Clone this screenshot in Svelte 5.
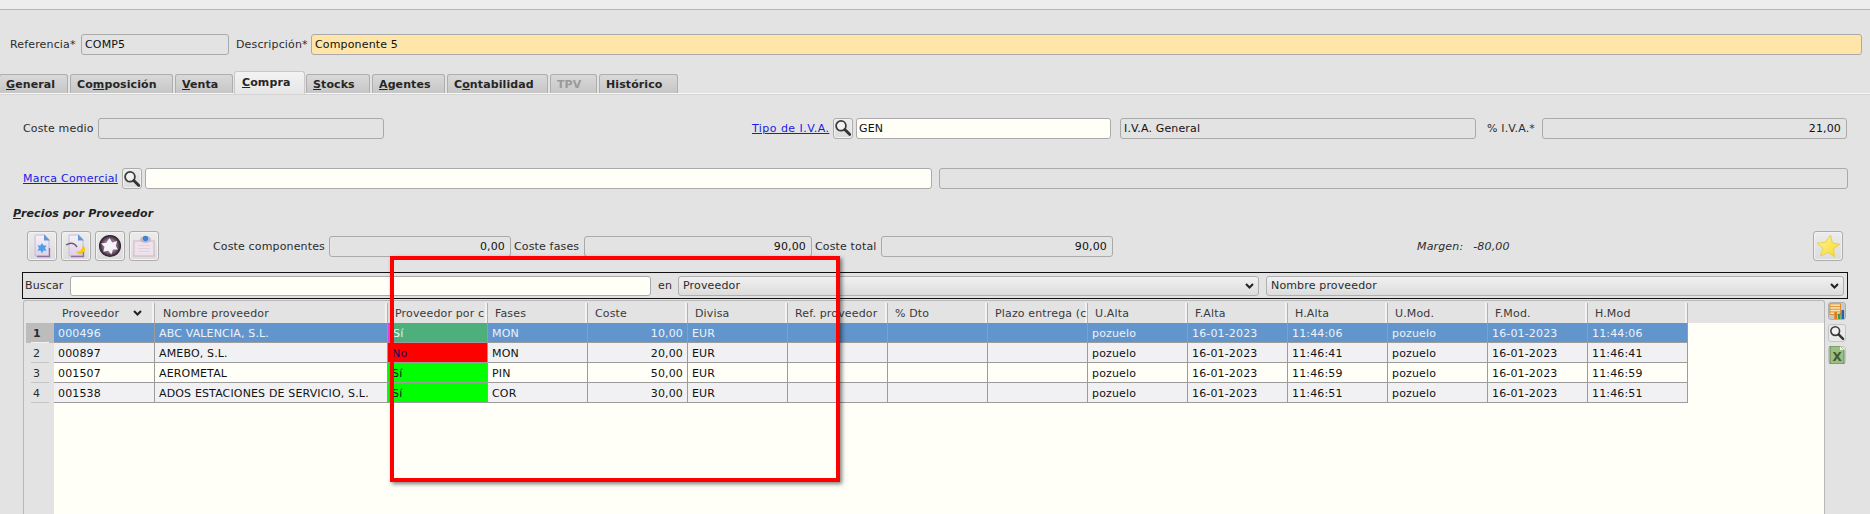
<script>
  const tabs = [
    { pre: '', u: 'G', post: 'eneral', w: 69 },
    { pre: 'Co', u: 'm', post: 'posición', w: 103 },
    { pre: '', u: 'V', post: 'enta', w: 58 },
    { pre: '', u: 'C', post: 'ompra', w: 71, active: true },
    { pre: '', u: 'S', post: 'tocks', w: 64 },
    { pre: '', u: 'A', post: 'gentes', w: 73 },
    { pre: 'C', u: 'o', post: 'ntabilidad', w: 101 },
    { pre: '', u: '', post: 'TPV', w: 47, disabled: true },
    { pre: '', u: '', post: 'Histórico', w: 79 }
  ];
  const cols = [
    { t: 'Proveedor', w: 101, sort: true },
    { t: 'Nombre proveedor', w: 233 },
    { t: 'Proveedor por c', w: 100 },
    { t: 'Fases', w: 100 },
    { t: 'Coste', w: 100, right: true },
    { t: 'Divisa', w: 100 },
    { t: 'Ref. proveedor', w: 100 },
    { t: '% Dto', w: 100 },
    { t: 'Plazo entrega (c', w: 100 },
    { t: 'U.Alta', w: 100 },
    { t: 'F.Alta', w: 100 },
    { t: 'H.Alta', w: 100 },
    { t: 'U.Mod.', w: 100 },
    { t: 'F.Mod.', w: 100 },
    { t: 'H.Mod', w: 100 }
  ];
  const rows = [
    ['000496', 'ABC VALENCIA, S.L.', 'Sí', 'MON', '10,00', 'EUR', '', '', '', 'pozuelo', '16-01-2023', '11:44:06', 'pozuelo', '16-01-2023', '11:44:06'],
    ['000897', 'AMEBO, S.L.', 'No', 'MON', '20,00', 'EUR', '', '', '', 'pozuelo', '16-01-2023', '11:46:41', 'pozuelo', '16-01-2023', '11:46:41'],
    ['001507', 'AEROMETAL', 'Sí', 'PIN', '50,00', 'EUR', '', '', '', 'pozuelo', '16-01-2023', '11:46:59', 'pozuelo', '16-01-2023', '11:46:59'],
    ['001538', 'ADOS ESTACIONES DE SERVICIO, S.L.', 'Sí', 'COR', '30,00', 'EUR', '', '', '', 'pozuelo', '16-01-2023', '11:46:51', 'pozuelo', '16-01-2023', '11:46:51']
  ];
</script>

{#snippet lens()}
  <svg width="18" height="18" viewBox="0 0 18 18">
    <circle cx="7" cy="6.800" r="4.900" fill="#f2f2f2" stroke="#3c3c3c" stroke-width="1.800" />
    <path d="M10.800 10.600 15.800 15.600" stroke="#333" stroke-width="2.800" stroke-linecap="round" />
  </svg>
{/snippet}

{#snippet chevron()}
  <svg class="chev" width="9" height="6" viewBox="0 0 9 6">
    <path d="M1 1 4.500 4.500 8 1" fill="none" stroke="#222" stroke-width="2" />
  </svg>
{/snippet}

<div class="page">
  <div class="topbar"></div>

  <div class="line head">
    <span class="lab ref-lab">Referencia*</span>
    <div class="box ref-box">COMP5</div>
    <span class="lab desc-lab">Descripción*</span>
    <div class="box desc-box">Componente 5</div>
  </div>

  <div class="tabs">
    {#each tabs as tab}
      <div class="tab" class:active={tab.active} class:disabled={tab.disabled} style="width:{tab.w}px">
        {tab.pre}<u>{tab.u}</u>{tab.post}
      </div>
    {/each}
  </div>

  <div class="line iva">
    <span class="lab medio-lab">Coste medio</span>
    <div class="box medio-box"></div>
    <a class="link iva-lab" href="#iva">Tipo de I.V.A.</a>
    <div class="btn small iva-btn">{@render lens()}</div>
    <div class="box white iva-box">GEN</div>
    <div class="box ivaname-box">I.V.A. General</div>
    <span class="lab pct-lab">% I.V.A.*</span>
    <div class="box right pct-box">21,00</div>
  </div>

  <div class="line marca">
    <a class="link marca-lab" href="#marca">Marca Comercial</a>
    <div class="btn small marca-btn">{@render lens()}</div>
    <div class="box white marca-box"></div>
    <div class="box marcaname-box"></div>
  </div>

  <div class="section"><u>P</u>recios por Proveedor</div>

  <div class="line tools">
    <div class="btn big">
      <svg width="24" height="26" viewBox="0 0 24 26">
        <defs>
          <linearGradient id="pg" x1="0" y1="0" x2="0" y2="1">
            <stop offset="0" stop-color="#f6f2f8" />
            <stop offset="1" stop-color="#dfcfe6" />
          </linearGradient>
        </defs>
        <path d="M5 2h10l4 5v16H5z" fill="url(#pg)" stroke="#c9b8d4" />
        <path d="M14 1.500l6 6h-6z" fill="#5e97de" />
        <path d="M12 10l1.500 2.600 3-.1-1.500 2.600 1.500 2.600-3-.1L12 20.200l-1.500-2.600-3 .1 1.500-2.600-1.500-2.600 3 .1z" fill="#4a9fe6" />
        <path d="M7 23.500h12.500V15" fill="none" stroke="#8f6fa6" stroke-width="1.300" />
      </svg>
    </div>
    <div class="btn big">
      <svg width="24" height="26" viewBox="0 0 24 26">
        <path d="M5 2h10l4 5v16H5z" fill="url(#pg)" stroke="#c9b8d4" />
        <path d="M14 1.500l6 6h-6z" fill="#5e97de" />
        <path d="M2 12c4-2.500 8-2.500 11 2" fill="none" stroke="#6b5a6e" stroke-width="1.400" />
        <path d="M19 12.500a4.800 4.800 0 1 1-7 6c3 .5 6-1 7-6z" fill="#f6c915" />
        <path d="M7 23.500h12.500V19" fill="none" stroke="#8f6fa6" stroke-width="1.300" />
      </svg>
    </div>
    <div class="btn big">
      <svg width="26" height="26" viewBox="0 0 26 26">
        <defs>
          <radialGradient id="rg">
            <stop offset="0.600" stop-color="#8c6c88" />
            <stop offset="1" stop-color="#1f191f" />
          </radialGradient>
        </defs>
        <circle cx="13" cy="13" r="11" fill="url(#rg)" />
        <path d="M12.500 5l2.700 4.600 5-1.600-1.500 5 2.300 3.400-5 .2-1.700 4.900-3-3.700-5 .9 1.200-5-3.500-3.200 5.200-.8z" fill="#f7f4f7" />
      </svg>
    </div>
    <div class="btn big">
      <svg width="26" height="26" viewBox="0 0 26 26">
        <rect x="3" y="8" width="20" height="15" fill="#f0e2ec" stroke="#cdb4c8" />
        <path d="M7 12.500h12M7 15.500h12M7 18.500h12" stroke="#e2d2de" />
        <ellipse cx="14.500" cy="6.500" rx="5.500" ry="3.400" fill="#c2bccb" />
        <circle cx="14.500" cy="5.500" r="2.700" fill="#3f82d0" />
      </svg>
    </div>
    <span class="lab comp-lab">Coste componentes</span>
    <div class="box right comp-box">0,00</div>
    <span class="lab fases-lab">Coste fases</span>
    <div class="box right fases-box">90,00</div>
    <span class="lab total-lab">Coste total</span>
    <div class="box right total-box">90,00</div>
    <span class="lab margen"><span>Margen:</span><span>-80,00</span></span>
    <div class="btn star">
      <svg width="26" height="26" viewBox="0 0 26 26">
        <defs>
          <linearGradient id="st" x1="0" y1="0" x2="1" y2="1">
            <stop offset="0" stop-color="#fff6a0" />
            <stop offset="1" stop-color="#f8d820" />
          </linearGradient>
        </defs>
        <path d="M15.500 2l1.800 7.800 7.700 1.500-6.500 4.400 1.200 8.300-6.700-4.700-7.500 3.700 2.500-7.800L2 10.200l8.200-.7z" fill="url(#st)" stroke="#e8d050" />
      </svg>
    </div>
  </div>

  <div class="search">
    <span class="lab buscar-lab">Buscar</span>
    <div class="box white buscar-box"></div>
    <span class="lab en-lab">en</span>
    <div class="select sel1">Proveedor{@render chevron()}</div>
    <div class="select sel2">Nombre proveedor{@render chevron()}</div>
  </div>

  <div class="tablewrap">
    <div class="table">
      <div class="rowheads">
        <div class="corner"></div>
        {#each rows as _, i}
          <div class="rh" class:current={i === 0}><span>{i + 1}</span></div>
        {/each}
      </div>
      <div class="data">
        <div class="hrow">
          {#each cols as c}
            <div class="hcell" style="width:{c.w}px">
              <span>{c.t}</span>
              {#if c.sort}{@render chevron()}{/if}
            </div>
          {/each}
        </div>
        {#each rows as row, r}
          <div class="drow" class:sel={r === 0} class:alt={r % 2 === 1}>
            {#each row as v, i}
              <div
                class="cell"
                class:num={cols[i].right}
                class:green={i === 2 && v === 'Sí'}
                class:red={i === 2 && v === 'No'}
                class:focus={i === 2 && r === 0}
                style="width:{cols[i].w}px"
              >{v}</div>
            {/each}
          </div>
        {/each}
      </div>
    </div>
    <div class="side">
      <div class="sbtn pressed">
        <svg width="18" height="18" viewBox="0 0 18 18">
          <rect x="1" y="1" width="12" height="12" fill="#f8e3b8" stroke="#d98a2a" />
          <path d="M1 4h12M1 7h12M1 10h12" stroke="#d98a2a" />
          <rect x="6" y="10" width="3" height="8" fill="#e07b1a" />
          <rect x="10" y="12" width="3" height="6" fill="#3f9a3a" />
          <rect x="14" y="8" width="3" height="10" fill="#1f62b8" />
        </svg>
      </div>
      <div class="sbtn">{@render lens()}</div>
      <div class="sbtn">
        <svg width="16" height="18" viewBox="0 0 16 18">
          <path d="M1 0h10l4 4v14H1z" fill="#9cbd85" stroke="#5d8a4c" />
          <path d="M11 0v4h4z" fill="#eef3e8" />
          <text x="3.500" y="15" class="xl">X</text>
        </svg>
      </div>
    </div>
  </div>

  <div class="callout"></div>
</div>

<style>
  :global(body) {
    margin: 0;
    background: #e3e3e3;
  }
  .page {
    position: relative;
    width: 1870px;
    height: 514px;
    overflow: hidden;
    background: #e3e3e3;
    color: #2c2c2c;
    font: 11px "DejaVu Sans", sans-serif;
    letter-spacing: 0.15px;
  }
  .topbar {
    height: 9px;
    background: #ededed;
    border-bottom: 1px solid #b4b4b4;
  }
  .line {
    display: flex;
    align-items: center;
    box-sizing: border-box;
  }
  .lab {
    white-space: nowrap;
    flex: none;
  }
  .box {
    box-sizing: border-box;
    height: 21px;
    flex: none;
    display: flex;
    align-items: center;
    padding: 0 3px;
    border: 1px solid #aaa;
    border-radius: 3px;
    background: #e3e3e3;
    color: #111;
  }
  .white {
    background: #fffff8;
  }
  .right {
    justify-content: flex-end;
    padding-right: 5px;
  }
  .link {
    color: #1a1ae6;
    text-decoration: underline;
    white-space: nowrap;
    flex: none;
  }
  .btn {
    box-sizing: border-box;
    flex: none;
    display: flex;
    align-items: center;
    justify-content: center;
    border: 1px solid #acacac;
    border-radius: 3px;
    background: linear-gradient(#ececec, #dcdcdc);
    box-shadow: inset 0 0 0 1px #f2f2f2;
  }
  .small {
    width: 20px;
    height: 21px;
  }
  .big {
    width: 30px;
    height: 30px;
    margin-right: 4px;
  }

  .head {
    height: 21px;
    margin-top: 24px;
    padding-left: 10px;
  }
  .ref-lab { width: 71px; }
  .ref-box { width: 148px; }
  .desc-lab { width: 75px; margin-left: 7px; }
  .desc-box { width: 1551px; background: #ffe6a8; }

  .tabs {
    display: flex;
    align-items: flex-end;
    height: 23px;
    margin-top: 16px;
    border-bottom: 1px solid #f7f7f7;
    box-sizing: border-box;
    box-shadow: 0 1px 0 #d4d4d4;
  }
  .tab {
    box-sizing: border-box;
    flex: none;
    height: 19px;
    margin-right: 2px;
    padding: 3px 0 0 6px;
    border: 1px solid #aeaeae;
    border-bottom: 0;
    border-radius: 3px 3px 0 0;
    background: linear-gradient(#d9d9d9, #c6c6c6);
    font-weight: 700;
    white-space: nowrap;
    color: #262626;
    letter-spacing: 0.1px;
  }
  .tab:first-child {
    margin-left: -1px;
  }
  .tab.active {
    height: 23px;
    margin: 0 1px -1px -1px;
    padding: 4px 0 0 7px;
    background: linear-gradient(#f3f3f3, #e6e6e6);
    border-color: #c8c8c8;
    position: relative;
  }
  .tab.disabled {
    color: #9a9a9a;
  }

  .iva {
    height: 22px;
    margin-top: 23px;
    padding-left: 23px;
  }
  .medio-lab { width: 75px; }
  .medio-box { width: 286px; }
  .iva-lab { width: 77px; margin-left: 368px; letter-spacing: 0.45px; }
  .iva-btn { margin-left: 4px; }
  .iva-box { width: 255px; margin-left: 3px; padding-left: 2px; }
  .ivaname-box { width: 356px; margin-left: 9px; }
  .pct-lab { width: 55px; margin-left: 11px; }
  .pct-box { width: 305px; }

  .marca {
    height: 21px;
    margin-top: 29px;
    padding-left: 23px;
  }
  .marca-lab { width: 95px; letter-spacing: 0.2px; }
  .marca-btn { margin-left: 4px; }
  .marca-box { width: 787px; margin-left: 3px; }
  .marcaname-box { width: 909px; margin-left: 7px; }

  .section {
    margin: 18px 0 0 13px;
    height: 14px;
    line-height: 14px;
    font-weight: 700;
    font-style: italic;
    color: #222;
  }

  .tools {
    height: 30px;
    margin-top: 10px;
    padding-left: 27px;
  }
  .comp-lab { width: 112px; margin-left: 50px; }
  .comp-box { width: 182px; margin-left: 4px; }
  .fases-lab { width: 70px; margin-left: 3px; }
  .fases-box { width: 228px; }
  .total-lab { width: 66px; margin-left: 3px; }
  .total-box { width: 232px; }
  .margen {
    display: flex;
    gap: 10px;
    width: 396px;
    margin-left: 304px;
    font-style: italic;
  }
  .star {
    width: 30px;
    height: 30px;
  }

  .search {
    box-sizing: border-box;
    display: flex;
    align-items: center;
    width: 1826px;
    height: 27px;
    margin: 11px 0 0 22px;
    border: 1px solid #111;
  }
  .buscar-lab { width: 45px; margin-left: 2px; }
  .buscar-box { width: 581px; height: 20px; }
  .en-lab { width: 20px; margin-left: 7px; }
  .select {
    position: relative;
    box-sizing: border-box;
    flex: none;
    height: 20px;
    padding: 0 4px;
    display: flex;
    align-items: center;
    justify-content: space-between;
    border: 1px solid #b0b0b0;
    border-radius: 3px;
    background: linear-gradient(#f1f1f1, #dcdcdc);
  }
  .sel1 { width: 581px; }
  .sel2 { width: 578px; margin-left: 7px; }

  .tablewrap {
    display: flex;
    margin: 1px 0 0 23px;
    height: 215px;
  }
  .table {
    box-sizing: border-box;
    display: flex;
    width: 1802px;
    height: 100%;
    padding: 2px 0 0 2px;
    border: 1px solid #b8b8b8;
    border-bottom: 0;
    border-radius: 3px 3px 0 0;
    background: #e3e3e3;
  }
  .rowheads {
    width: 28px;
    flex: none;
  }
  .corner {
    height: 20px;
  }
  .rh {
    box-sizing: border-box;
    height: 20px;
    padding: 4px 0 0 7px;
    position: relative;
  }
  .rh::after {
    content: "";
    position: absolute;
    left: 5px;
    right: 5px;
    bottom: 0;
    height: 1px;
    background: #c4c4c4;
  }
  .rh.current {
    font-weight: 700;
    background: #bcbcbc;
  }
  .rh.current::after {
    background: #f2f2f2;
  }
  .data {
    flex: 1;
    background: #fffff8;
    min-width: 0;
  }
  .hrow {
    display: flex;
    height: 20px;
    background: #e3e3e3;
    box-sizing: border-box;
  }
  .hcell {
    box-sizing: border-box;
    flex: none;
    display: flex;
    align-items: center;
    justify-content: space-between;
    padding: 0 12px 0 7px;
    overflow: hidden;
    white-space: nowrap;
    border-right: 1px solid #b0b0b0;
    box-shadow: inset -2px 0 0 #f2f2f2;
    color: #3a3a3a;
  }
  .hcell:nth-child(-n + 2) {
    padding-left: 8px;
  }
  .hcell span {
    flex: none;
  }
  .drow {
    display: flex;
    width: max-content;
    height: 20px;
    background: #fffff8;
  }
  .drow.alt {
    background: #f1f1f3;
  }
  .drow.sel {
    background: #6195cc;
    color: #f2f2f2;
  }
  .cell {
    box-sizing: border-box;
    flex: none;
    height: 20px;
    padding: 1px 4px 0;
    line-height: 19px;
    white-space: nowrap;
    overflow: hidden;
    border-right: 1px solid #9c9c9c;
    border-bottom: 1px solid #9c9c9c;
    color: #111;
  }
  .drow.sel .cell {
    color: #eef2f8;
  }
  .num {
    text-align: right;
  }
  .green {
    background: #00ff00;
  }
  .red {
    background: #ff0000;
    color: #1a0a66;
  }
  .drow.sel .focus {
    background: repeating-conic-gradient(#1fd43f 0 25%, #4cae7a 0 50%) 0 0 / 2px 2px;
    border-left: 1px dotted #e040e0;
  }
  .side {
    display: flex;
    flex-direction: column;
    gap: 4px;
    margin: 2px 0 0 3px;
  }
  .sbtn {
    box-sizing: border-box;
    width: 18px;
    height: 18px;
    display: flex;
    align-items: center;
    justify-content: center;
    border: 1px solid #c4c4c4;
    border-radius: 3px;
    background: #e9e9e9;
  }
  .sbtn.pressed {
    background: #c8c8c8;
    border-color: #b0b0b0;
  }
  .xl {
    font: 700 12px "DejaVu Sans", sans-serif;
    fill: #3f5a32;
  }
  .callout {
    position: absolute;
    left: 390px;
    top: 256px;
    width: 450px;
    height: 226px;
    box-sizing: border-box;
    border: 4px solid #ff0000;
    box-shadow: 2px 2px 4px rgba(0, 0, 0, 0.5);
  }
</style>
